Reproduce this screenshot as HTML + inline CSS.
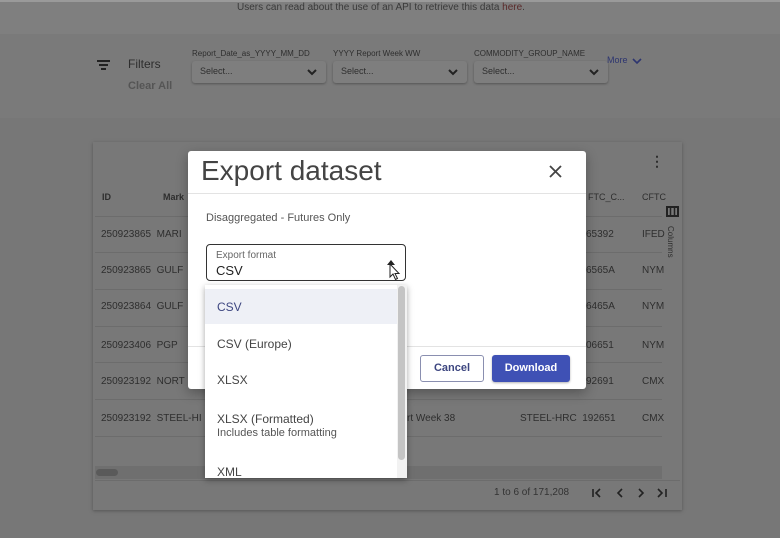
<!DOCTYPE html>
<html><head><style>
*{box-sizing:border-box;margin:0;padding:0}
body{width:780px;height:538px;overflow:hidden;background:#777;font-family:"Liberation Sans",sans-serif;position:relative;color:#222}
.a{position:absolute;white-space:nowrap}
.dim{color:#2e2e2e}
</style></head><body>
<div class="a" style="left:0;top:0;width:780px;height:34px;background:#7f7f7f"></div>
<div class="a" style="left:0;top:0;width:780px;height:2px;background:#9a9a9a"></div>
<div class="a" style="left:237px;top:2px;font-size:10px;color:#3a3a3a">Users can read about the use of an API to retrieve this data <span style="color:#5a2a2a">here</span>.</div>
<div class="a" style="left:0;top:34px;width:780px;height:84px;background:#7a7a7a"></div>
<div class="a" style="left:97px;top:60px;width:13px;height:2px;background:#222"></div>
<div class="a" style="left:99px;top:64px;width:9px;height:2px;background:#222"></div>
<div class="a" style="left:101px;top:68px;width:5px;height:2px;background:#222"></div>
<div class="a dim" style="left:128px;top:57px;font-size:12px">Filters</div>
<div class="a" style="left:128px;top:80px;font-size:11px;color:#555;font-weight:bold">Clear All</div>
<div class="a dim" style="left:192px;top:49px;font-size:8px">Report_Date_as_YYYY_MM_DD</div>
<div class="a dim" style="left:333px;top:49px;font-size:8px">YYYY Report Week WW</div>
<div class="a dim" style="left:474px;top:49px;font-size:8px">COMMODITY_GROUP_NAME</div>
<div class="a" style="left:192px;top:61px;width:134px;height:22px;background:#7e7e7e;border-radius:3px;box-shadow:0 1px 2px #555"></div>
<div class="a" style="left:333px;top:61px;width:134px;height:22px;background:#7e7e7e;border-radius:3px;box-shadow:0 1px 2px #555"></div>
<div class="a" style="left:474px;top:61px;width:134px;height:22px;background:#7e7e7e;border-radius:3px;box-shadow:0 1px 2px #555"></div>
<div class="a dim" style="left:200px;top:66px;font-size:9px">Select...</div>
<div class="a dim" style="left:341px;top:66px;font-size:9px">Select...</div>
<div class="a dim" style="left:482px;top:66px;font-size:9px">Select...</div>
<svg class="a" style="left:307px;top:69px" width="10" height="7"><path d="M1 1 L5 5 L9 1" stroke="#222" stroke-width="2" fill="none"/></svg>
<svg class="a" style="left:448px;top:69px" width="10" height="7"><path d="M1 1 L5 5 L9 1" stroke="#222" stroke-width="2" fill="none"/></svg>
<svg class="a" style="left:589px;top:69px" width="10" height="7"><path d="M1 1 L5 5 L9 1" stroke="#222" stroke-width="2" fill="none"/></svg>
<div class="a" style="left:607px;top:55px;font-size:9px;color:#2d3570">More</div>
<svg class="a" style="left:632px;top:58px" width="10" height="7"><path d="M1 1 L5 5 L9 1" stroke="#2d3570" stroke-width="1.6" fill="none"/></svg>

<!-- table card -->
<div class="a" style="left:93px;top:142px;width:589px;height:368px;background:#787878;box-shadow:0 1px 3px #555"></div>
<div class="a dim" style="left:650px;top:153px;font-size:14px;font-weight:bold">&#8942;</div>
<div class="a dim" style="left:102px;top:192px;font-size:9px;font-weight:bold">ID</div>
<div class="a dim" style="left:163px;top:192px;font-size:9px;font-weight:bold">Mark</div>
<div class="a dim" style="left:588px;top:192px;font-size:9px">FTC_C...</div>
<div class="a dim" style="left:642px;top:192px;font-size:9px">CFTC</div>
<svg class="a" style="left:666px;top:206px" width="13" height="11"><rect x="1" y="1" width="11" height="9" fill="none" stroke="#222" stroke-width="2"/><path d="M4.5 1v9M8.5 1v9" stroke="#222" stroke-width="1.5"/></svg>
<div class="a dim" style="left:666px;top:226px;font-size:8px;writing-mode:vertical-rl">Columns</div>
<div class="a" style="left:95px;top:216px;width:567px;height:1px;background:#6c6c6c"></div>
<div class="a" style="left:95px;top:252px;width:567px;height:1px;background:#6c6c6c"></div>
<div class="a" style="left:95px;top:289px;width:567px;height:1px;background:#6c6c6c"></div>
<div class="a" style="left:95px;top:326px;width:567px;height:1px;background:#6c6c6c"></div>
<div class="a" style="left:95px;top:362px;width:567px;height:1px;background:#6c6c6c"></div>
<div class="a" style="left:95px;top:399px;width:567px;height:1px;background:#6c6c6c"></div>
<div class="a" style="left:95px;top:436px;width:567px;height:1px;background:#6c6c6c"></div>
<div class="a dim" style="left:101px;top:229px;font-size:10px;line-height:12px">250923865&nbsp;&nbsp;MARI<br><br><br>250923865&nbsp;&nbsp;GULF<br><br><br>250923864&nbsp;&nbsp;GULF</div>
<div class="a dim" style="left:101px;top:340px;font-size:10px">250923406&nbsp;&nbsp;PGP</div>
<div class="a dim" style="left:101px;top:376px;font-size:10px">250923192&nbsp;&nbsp;NORT</div>
<div class="a dim" style="left:101px;top:413px;font-size:10px">250923192&nbsp;&nbsp;STEEL-HI</div>
<div class="a dim" style="left:586px;top:229px;font-size:10px;line-height:12px">65392<br><br><br>6565A<br><br><br>6465A</div>
<div class="a dim" style="left:586px;top:340px;font-size:10px">06651</div>
<div class="a dim" style="left:586px;top:376px;font-size:10px">92691</div>
<div class="a dim" style="left:520px;top:413px;font-size:10px">STEEL-HRC&nbsp;&nbsp;192651</div>
<div class="a dim" style="left:642px;top:229px;font-size:10px;line-height:12px">IFED<br><br><br>NYM<br><br><br>NYM</div>
<div class="a dim" style="left:642px;top:340px;font-size:10px">NYM</div>
<div class="a dim" style="left:642px;top:376px;font-size:10px">CMX</div>
<div class="a dim" style="left:642px;top:413px;font-size:10px">CMX</div>
<div class="a dim" style="left:407px;top:413px;font-size:10px">rt Week 38</div>
<div class="a" style="left:95px;top:466px;width:567px;height:13px;background:#6f6f6f"></div>
<div class="a" style="left:96px;top:469px;width:22px;height:7px;background:#5a5a5a;border-radius:4px"></div>
<div class="a" style="left:95px;top:480px;width:585px;height:1px;background:#6c6c6c"></div>
<div class="a dim" style="left:494px;top:487px;font-size:10px;color:#333">1 to 6 of 171,208</div>
<svg class="a" style="left:590px;top:487px" width="80" height="12" viewBox="0 0 80 12"><g stroke="#222" stroke-width="1.6" fill="none"><path d="M3 2v8M10 2L6 6l4 4"/><path d="M32 2L28 6l4 4"/><path d="M49 2l4 4-4 4"/><path d="M68 2l4 4-4 4M76 2v8"/></g></svg>

<!-- modal -->
<div class="a" style="left:188px;top:151px;width:398px;height:238px;background:#fff;border-radius:3px;box-shadow:0 4px 12px rgba(0,0,0,.3)"></div>
<div class="a" style="left:201px;top:155px;font-size:28px;color:#444">Export dataset</div>
<svg class="a" style="left:549px;top:165px" width="13" height="13"><path d="M1 1L12 12M12 1L1 12" stroke="#444" stroke-width="1.8"/></svg>
<div class="a" style="left:188px;top:193px;width:398px;height:1px;background:#e3e3e3"></div>
<div class="a" style="left:206px;top:212px;font-size:11px;color:#555">Disaggregated - Futures Only</div>
<div class="a" style="left:206px;top:244px;width:200px;height:37px;border:1.5px solid #333;border-radius:4px"></div>
<div class="a" style="left:216px;top:250px;font-size:10px;color:#666">Export format</div>
<div class="a" style="left:216px;top:263px;font-size:13px;color:#222">CSV</div>
<div class="a" style="left:387px;top:260px;width:0;height:0;border-left:4px solid transparent;border-right:4px solid transparent;border-bottom:5px solid #222"></div>
<svg class="a" style="left:389px;top:263px" width="12" height="18" viewBox="0 0 12 18"><path d="M1 1 L1 14 L4 11 L6.5 16.5 L8.5 15.5 L6 10.5 L10 10.5 Z" fill="#fff" stroke="#222" stroke-width="1"/></svg>
<div class="a" style="left:188px;top:346px;width:398px;height:1px;background:#e3e3e3"></div>
<div class="a" style="left:420px;top:355px;width:64px;height:27px;border:1px solid #8a8fb0;border-radius:3px;color:#3d4680;font-size:11px;font-weight:bold;text-align:center;line-height:25px">Cancel</div>
<div class="a" style="left:492px;top:355px;width:78px;height:27px;background:#3f51b5;border-radius:3px;color:#fff;font-size:11px;font-weight:bold;text-align:center;line-height:27px;box-shadow:0 1px 2px rgba(0,0,0,.3)">Download</div>

<!-- dropdown -->
<div class="a" style="left:205px;top:285px;width:202px;height:193px;background:#fff;box-shadow:0 2px 6px rgba(0,0,0,.35);overflow:hidden">
<div class="a" style="left:0;top:4px;width:192px;height:35px;background:#eef0f6"></div>
<div class="a" style="left:12px;top:15px;font-size:12px;color:#3d4680">CSV</div>
<div class="a" style="left:12px;top:52px;font-size:12px;color:#444">CSV (Europe)</div>
<div class="a" style="left:12px;top:88px;font-size:12px;color:#444">XLSX</div>
<div class="a" style="left:12px;top:127px;font-size:12px;color:#444">XLSX (Formatted)</div>
<div class="a" style="left:12px;top:142px;font-size:11px;color:#555">Includes table formatting</div>
<div class="a" style="left:12px;top:180px;font-size:12px;color:#444">XML</div>
<div class="a" style="left:192px;top:0;width:10px;height:193px;background:#f2f2f2"></div>
<div class="a" style="left:193px;top:1px;width:7px;height:174px;background:#c4c4c4;border-radius:4px"></div>
</div>
</body></html>
